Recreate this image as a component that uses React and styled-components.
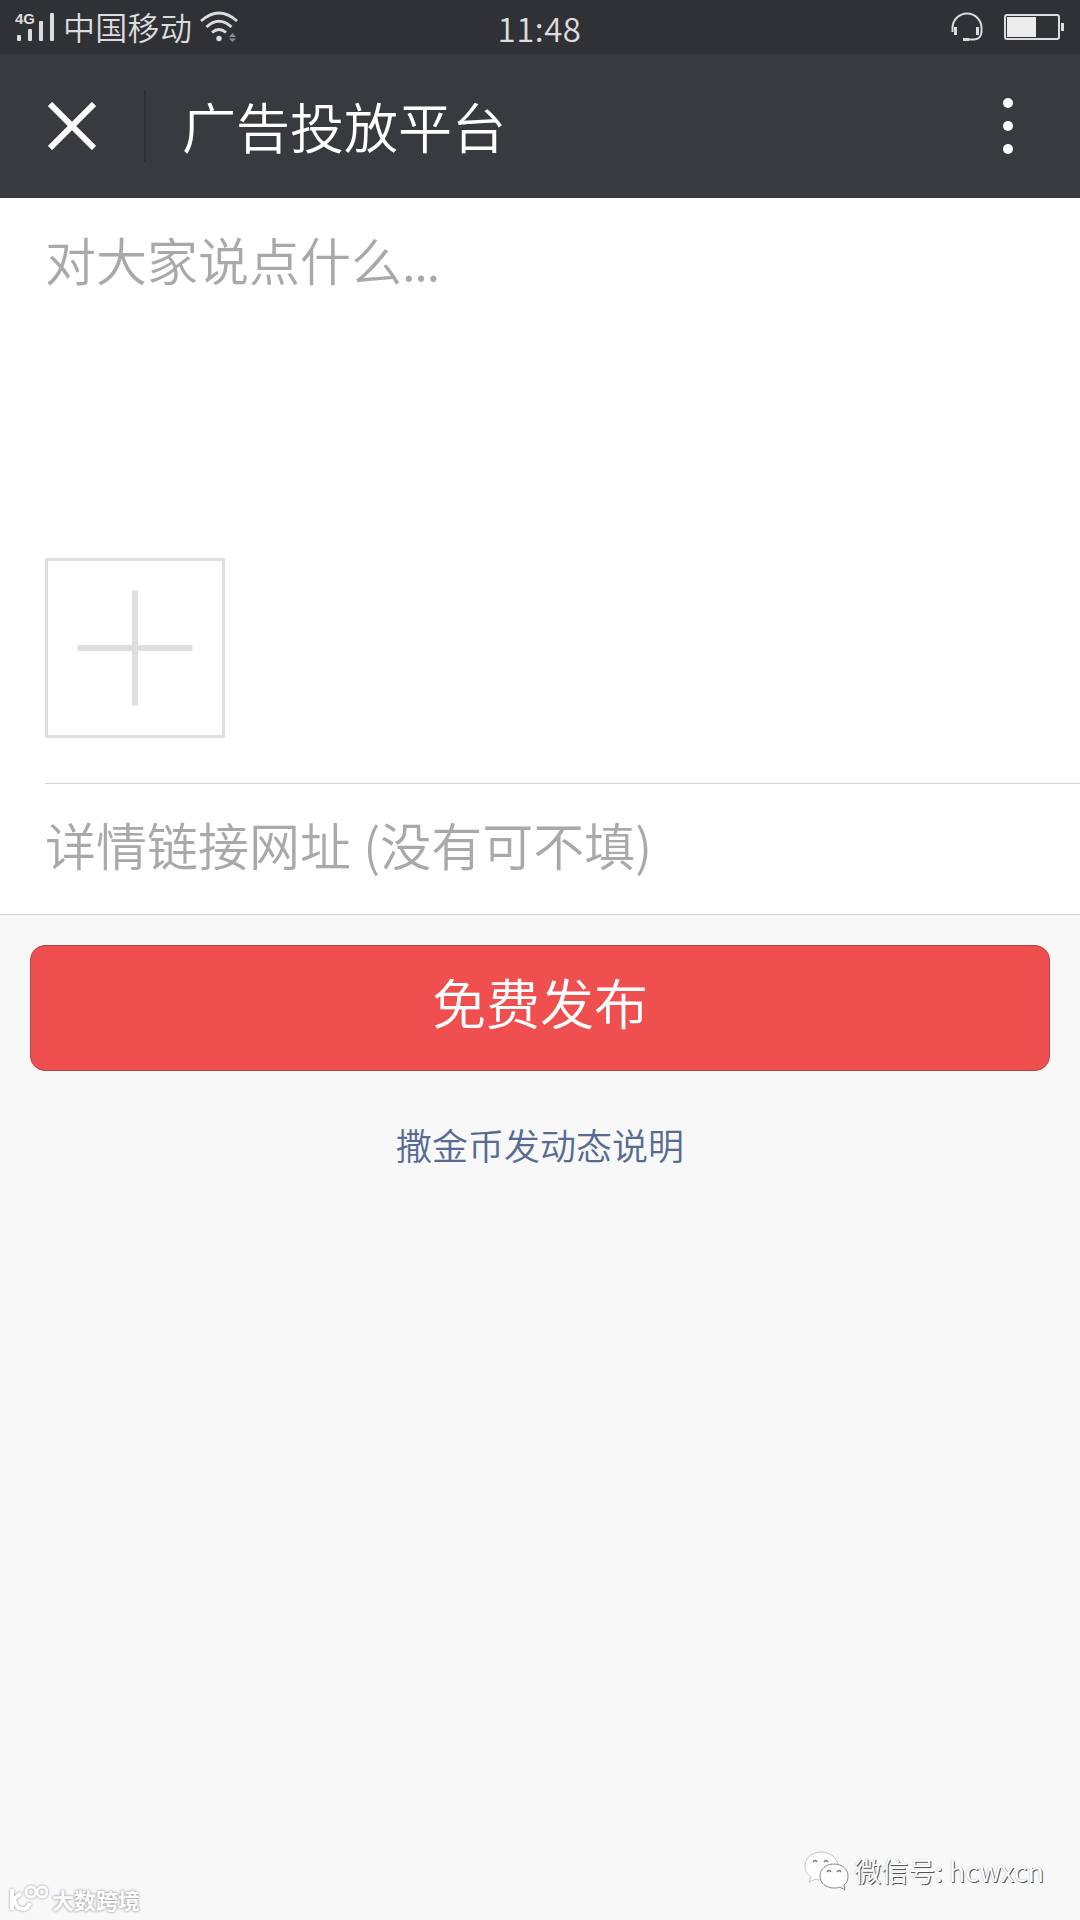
import React from 'react';
import styled, { createGlobalStyle } from 'styled-components';

const GlobalStyle = createGlobalStyle`
    * {
        box-sizing: border-box;
    }
    body {
        margin: 0;
        background: #f8f8f8;
        font-family: 'Noto Sans CJK SC', sans-serif;
        font-weight: 350;
    }
`;

const Page = styled.div`
    display: flex;
    flex-direction: column;
    width: 1080px;
    height: 1920px;
    overflow: hidden;
    background: #f8f8f8;
`;

const StatusBar = styled.div`
    display: grid;
    grid-template-columns: 1fr auto 1fr;
    height: 54px;
    padding: 0 16px 0 15px;
    background: #303135;
    color: #dcdcde;
`;

const StatusGroup = styled.div`
    display: flex;
    align-items: flex-start;
    justify-content: ${(props) => (props.$end ? 'flex-end' : 'flex-start')};
`;

const Carrier = styled.span`
    margin: 3px 0 0 8px;
    font-size: 32px;
    line-height: 46px;
    letter-spacing: 0.3px;
`;

const Clock = styled.span`
    padding-top: 5px;
    font-size: 33px;
    line-height: 46px;
    letter-spacing: 0.5px;
`;

const SignalIcon = styled.svg`
    margin-top: 10px;
`;

const WifiIcon = styled.svg`
    margin: 10px 0 0 8px;
`;

const HeadsetIcon = styled.svg`
    margin: 12px 21px 0 0;
`;

const BatteryIcon = styled.svg`
    margin-top: 13px;
`;

const Header = styled.header`
    display: flex;
    align-items: center;
    height: 144px;
    background: #393a3f;
    color: #fff;
`;

const CloseButton = styled.button`
    display: flex;
    align-items: center;
    justify-content: center;
    width: 146px;
    height: 72px;
    padding: 0;
    border: 0;
    border-right: 2px solid #2e2f33;
    background: none;
`;

const Title = styled.h1`
    flex: 1;
    margin: 0 0 0 36px;
    font-size: 54px;
    font-weight: 350;
    line-height: 80px;
`;

const MoreButton = styled.button`
    display: flex;
    flex-direction: column;
    align-items: center;
    gap: 13px;
    width: 144px;
    padding: 0;
    border: 0;
    background: none;
`;

const Dot = styled.span`
    width: 10px;
    height: 10px;
    border-radius: 50%;
    background: #fff;
`;

const Form = styled.section`
    height: 717px;
    padding: 23px 0 0 45px;
    background: #fff;
    border-bottom: 1px solid #cfcfcf;
`;

const Placeholder = styled.div`
    height: ${(props) => props.$height}px;
    color: #a9a9a9;
    font-size: 51px;
    line-height: 76px;
    white-space: pre;
    word-spacing: 1px;
`;

const Ellipsis = styled.span`
    letter-spacing: -1.5px;
`;

const AddImage = styled.div`
    display: flex;
    align-items: center;
    justify-content: center;
    width: 180px;
    height: 180px;
    border: 3px solid #dfdfdf;
`;

const Divider = styled.div`
    height: 1px;
    margin: 45px 0 22px;
    background: #d4d4d4;
`;

const PublishButton = styled.button`
    flex: none;
    height: 126px;
    margin: 30px 30px 0;
    padding: 0 0 12px;
    border: 1px solid #b84446;
    border-radius: 15px;
    background: #ef4f4f;
    color: #fff;
    font: 350 54px/80px 'Noto Sans CJK SC', sans-serif;
`;

const HelpLink = styled.a`
    align-self: center;
    margin-top: 46px;
    color: #576b95;
    font-size: 36px;
    line-height: 54px;
`;

const Footer = styled.footer`
    display: flex;
    align-items: flex-end;
    justify-content: space-between;
    height: 90px;
    margin-top: auto;
    padding: 0 36px 0 8px;
`;

const SiteMark = styled.div`
    display: flex;
    align-items: center;
    gap: 4px;
    height: 38px;
    margin-bottom: 2px;
    color: #fff;
    font-size: 22px;
    font-weight: 700;
    line-height: 32px;
    text-shadow: 0 0 2px #999, 0 0 3px #aaa;
`;

const SiteLogo = styled.svg`
    filter: drop-shadow(0 0 1px #888);
`;

const Account = styled.div`
    display: flex;
    align-items: center;
    gap: 5px;
    height: 50px;
    margin-bottom: 24px;
    color: #fff;
    font-size: 27px;
    font-weight: 400;
    line-height: 40px;
    text-shadow: 1px 1px 0 #555, 0 0 1px #999;
`;

const App = () => {
    return (
        <Page>
            <GlobalStyle />
            <StatusBar>
                <StatusGroup>
                    <SignalIcon width="40" height="34" fill="#dcdcde">
                        <text x="0" y="14" fontFamily="Liberation Sans" fontSize="15" fontWeight="700">4G</text>
                        <rect x="2" y="25" width="4" height="6" rx="1" />
                        <rect x="13" y="19" width="4" height="12" rx="1" />
                        <rect x="24" y="11" width="4" height="20" rx="1" />
                        <rect x="35" y="3" width="4" height="28" rx="1" />
                    </SignalIcon>
                    <Carrier>中国移动</Carrier>
                    <WifiIcon width="40" height="34" fill="none" stroke="#dcdcde" strokeWidth="2.8">
                        <path d="M1 11Q19 -5 37 11" />
                        <path d="M6.500 17Q19 5.500 31.500 17" />
                        <path d="M12 22.500Q19 16.500 26 22.500" />
                        <circle cx="19" cy="28.500" r="2.700" fill="#dcdcde" stroke="none" />
                        <path d="M29 27l3.500-4 3.500 4zM29 28.500l3.500 3.500 3.500-3.500z" fill="#8b8c90" stroke="none" />
                    </WifiIcon>
                </StatusGroup>
                <Clock>11:48</Clock>
                <StatusGroup $end>
                    <HeadsetIcon width="32" height="30" fill="none" stroke="#dcdcde" strokeWidth="2">
                        <path d="M1.500 20V16A14.500 14.500 0 0 1 30.500 16V20Q30 27 23 27.500H13" />
                        <path d="M4.500 15V23M26.500 15V23" strokeWidth="3" />
                        <path d="M12 27.500H18" strokeWidth="3" />
                    </HeadsetIcon>
                    <BatteryIcon width="60" height="28">
                        <rect x="1" y="2" width="54" height="24" rx="2" fill="none" stroke="#dcdcde" strokeWidth="2" />
                        <rect x="3" y="4" width="29" height="20" fill="#ececec" />
                        <rect x="57" y="10" width="3" height="8" fill="#dcdcde" />
                    </BatteryIcon>
                </StatusGroup>
            </StatusBar>

            <Header>
                <CloseButton aria-label="关闭">
                    <svg width="48" height="48" stroke="#fff" strokeWidth="6">
                        <path d="M2 2L46 46M46 2L2 46" />
                    </svg>
                </CloseButton>
                <Title>广告投放平台</Title>
                <MoreButton aria-label="更多">
                    <Dot />
                    <Dot />
                    <Dot />
                </MoreButton>
            </Header>

            <Form>
                <Placeholder $height={337}>对大家说点什么<Ellipsis>...</Ellipsis></Placeholder>
                <AddImage>
                    <svg width="116" height="116" stroke="#dfdfdf" strokeWidth="6">
                        <path d="M58 0.500V115.500M0.500 58H115.500" />
                    </svg>
                </AddImage>
                <Divider />
                <Placeholder $height={76}>详情链接网址 (没有可不填)</Placeholder>
            </Form>

            <PublishButton>免费发布</PublishButton>
            <HelpLink>撒金币发动态说明</HelpLink>

            <Footer>
                <SiteMark>
                    <SiteLogo width="40" height="30" fill="none" stroke="#fff" strokeWidth="4">
                        <path d="M4 5V26M13 9L6 15Q8 26 16 25Q20 24 22 19" />
                        <circle cx="23" cy="8" r="5" strokeWidth="3" />
                        <circle cx="34" cy="8" r="5" strokeWidth="3" />
                    </SiteLogo>
                    大数跨境
                </SiteMark>
                <Account>
                    <svg width="45" height="40" fill="#fff" stroke="#c4c4c4" strokeWidth="1">
                        <path d="M17 1C8 1 1 7 1 15c0 5 2 8 6 11l-2 5 7-3c2 1 4 1 6 1 9 0 16-6 16-14S26 1 17 1z" />
                        <path d="M30 13c-8 0-14 5-14 12s6 12 14 12c2 0 4 0 6-1l5 3-1-5c3-2 4-5 4-9 0-7-6-12-14-12z" stroke="#888" />
                        <path d="M9 11q2-3 4 0M20 11q2-3 4 0M23 21q2-3 4 0M33 21q2-3 4 0" fill="none" stroke="#777" strokeWidth="1.500" />
                    </svg>
                    微信号: hcwxcn
                </Account>
            </Footer>
        </Page>
    );
};

export default App;
